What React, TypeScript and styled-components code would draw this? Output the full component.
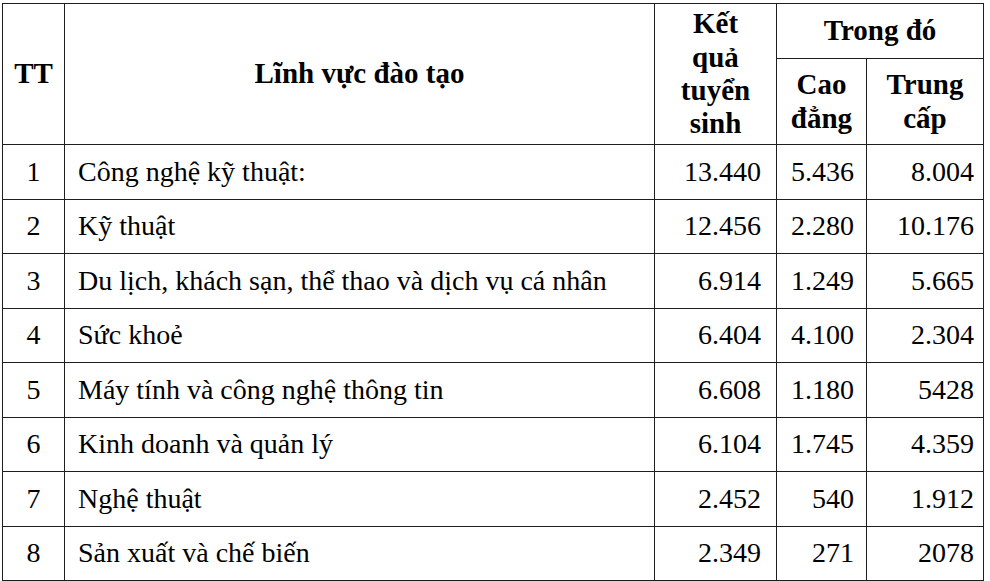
import React from "react";
import styled, { createGlobalStyle } from "styled-components";

const Global = createGlobalStyle`
  html, body { margin: 0; padding: 0; background: #ffffff; color: #000; }
`;

const Page = styled.div`
  padding: 3px 0 0 2px;
`;

const Table = styled.table`
  border-collapse: collapse;
  table-layout: fixed;
  width: 982px;
  font-size: 28px;
  font-weight: 400;
  color: #000;
`;

const HeadCell = styled.th<{ $h?: number }>`
  border: 1px solid #1e1e1e;
  font-family: "Liberation Serif", Tinos, "Times New Roman", "DejaVu Serif", serif;
  font-size: 29px;
  font-weight: 700;
  line-height: 1.15;
  text-align: center;
  vertical-align: middle;
  padding: 0 4px;
  height: ${(p) => (p.$h ? `${p.$h}px` : "auto")};
`;

const Row = styled.tr`
  height: 54.5px;
`;

const Cell = styled.td<{ $align?: "left" | "right" | "center"; $pr?: number; $pl?: number }>`
  border: 1px solid #1e1e1e;
  font-family: "Liberation Serif", Tinos, "Times New Roman", "DejaVu Serif", serif;
  font-size: 28px;
  font-weight: 400;
  text-align: ${(p) => p.$align ?? "left"};
  vertical-align: middle;
  padding: 0 ${(p) => p.$pr ?? 0}px 0 ${(p) => p.$pl ?? 0}px;
  white-space: nowrap;
`;

type R = { tt: string; name: string; total: string; cd: string; tc: string };

const rows: R[] = [
  { tt: "1", name: "Công nghệ kỹ thuật:", total: "13.440", cd: "5.436", tc: "8.004" },
  { tt: "2", name: "Kỹ thuật", total: "12.456", cd: "2.280", tc: "10.176" },
  { tt: "3", name: "Du lịch, khách sạn, thể thao và dịch vụ cá nhân", total: "6.914", cd: "1.249", tc: "5.665" },
  { tt: "4", name: "Sức khoẻ", total: "6.404", cd: "4.100", tc: "2.304" },
  { tt: "5", name: "Máy tính và công nghệ thông tin", total: "6.608", cd: "1.180", tc: "5428" },
  { tt: "6", name: "Kinh doanh và quản lý", total: "6.104", cd: "1.745", tc: "4.359" },
  { tt: "7", name: "Nghệ thuật", total: "2.452", cd: "540", tc: "1.912" },
  { tt: "8", name: "Sản xuất và chế biến", total: "2.349", cd: "271", tc: "2078" },
];

export default function App() {
  return (
    <>
      <Global />
      <Page>
        <Table>
          <colgroup>
            <col style={{ width: 62 }} />
            <col style={{ width: 590 }} />
            <col style={{ width: 122 }} />
            <col style={{ width: 90 }} />
            <col style={{ width: 117 }} />
          </colgroup>
          <thead>
            <tr>
              <HeadCell rowSpan={2}>TT</HeadCell>
              <HeadCell rowSpan={2}>Lĩnh vực đào tạo</HeadCell>
              <HeadCell rowSpan={2}>
                Kết
                <br />
                quả
                <br />
                tuyển
                <br />
                sinh
              </HeadCell>
              <HeadCell colSpan={2} $h={54}>
                Trong đó
              </HeadCell>
            </tr>
            <tr>
              <HeadCell $h={85}>
                Cao
                <br />
                đẳng
              </HeadCell>
              <HeadCell $h={85}>
                Trung
                <br />
                cấp
              </HeadCell>
            </tr>
          </thead>
          <tbody>
            {rows.map((r) => (
              <Row key={r.tt}>
                <Cell $align="center">{r.tt}</Cell>
                <Cell $pl={13}>{r.name}</Cell>
                <Cell $align="right" $pr={15}>{r.total}</Cell>
                <Cell $align="right" $pr={12}>{r.cd}</Cell>
                <Cell $align="right" $pr={9}>{r.tc}</Cell>
              </Row>
            ))}
          </tbody>
        </Table>
      </Page>
    </>
  );
}
